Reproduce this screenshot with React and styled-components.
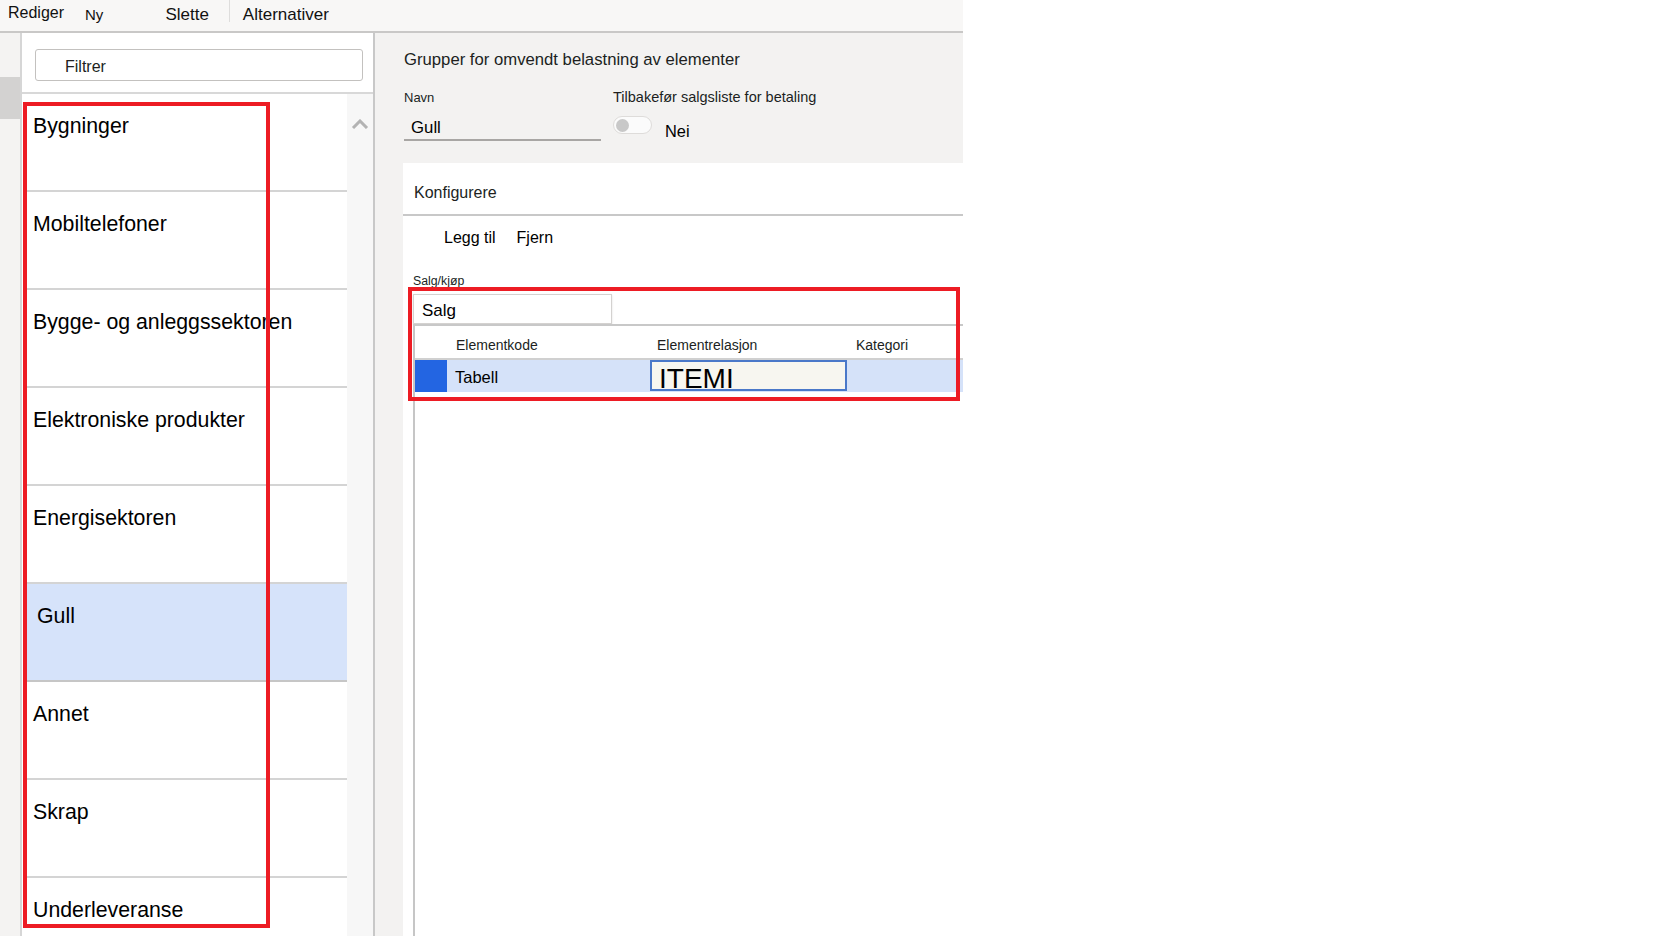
import React from 'react';
import styled, { createGlobalStyle } from 'styled-components';

const GlobalStyle = createGlobalStyle`
  html, body { margin: 0; padding: 0; background: #fff; }
  body { font-family: "Liberation Sans", Arial, sans-serif; color: #000; }
`;

const Frame = styled.div`
  width: 963px;
  height: 936px;
  display: flex;
  flex-direction: column;
  overflow: hidden;
`;

const TopBar = styled.div`
  height: 31px;
  flex-shrink: 0;
  display: flex;
  align-items: flex-start;
  background: #f8f7f6;
  border-bottom: 2px solid #c9c8c7;
`;

const MenuItem = styled.span`
  font-size: ${p => p.size}px;
  line-height: 20px;
  margin-left: ${p => p.gap}px;
  margin-top: ${p => p.top}px;
  color: #111;
  white-space: nowrap;
`;

const MenuDivider = styled.span`
  width: 1px;
  height: 22px;
  margin-left: 20px;
  background: #dedddc;
`;

const Body = styled.div`
  flex: 1;
  min-height: 0;
  display: flex;
`;

const Rail = styled.div`
  width: 20px;
  flex-shrink: 0;
  background: #f4f3f2;
  display: flex;
  flex-direction: column;
`;

const RailMark = styled.div`
  margin-top: 44px;
  height: 42px;
  background: #d3d2d1;
`;

const ListPanel = styled.div`
  position: relative;
  width: 351px;
  flex-shrink: 0;
  background: #fff;
  border-left: 2px solid #d6d6d6;
  border-right: 2px solid #c8c8c8;
  display: flex;
  flex-direction: column;
`;

const FilterBox = styled.div`
  margin: 16px 0 0 13px;
  width: 328px;
  height: 32px;
  box-sizing: border-box;
  border: 1.5px solid #c3c1bf;
  border-radius: 3px;
  padding: 3px 0 0 29px;
  display: flex;
  align-items: center;
  font-size: 16px;
  color: #201f1e;
`;

const ListArea = styled.div`
  margin-top: 11px;
  border-top: 2px solid #d8d8d8;
  flex: 1;
  min-height: 0;
  display: flex;
  overflow: hidden;
`;

const List = styled.div`
  margin-left: 4px;
  width: 321px;
  display: flex;
  flex-direction: column;
`;

const Item = styled.div`
  height: 98px;
  flex-shrink: 0;
  box-sizing: border-box;
  border-bottom: 2px solid ${p => (p.selected ? '#c6c6c6' : '#d4d4d4')};
  background: ${p => (p.selected ? '#d6e3fa' : '#fff')};
  padding: 19px 0 0 ${p => (p.selected ? 11 : 7)}px;
  font-size: 21.3px;
  line-height: 26px;
  white-space: nowrap;
`;

const ScrollTrack = styled.div`
  width: 26px;
  background: #f7f7f7;
  display: flex;
  justify-content: center;
  padding-top: 25px;
  box-sizing: border-box;
`;

const Annotation = styled.div`
  position: absolute;
  left: ${p => p.x}px;
  top: ${p => p.y}px;
  width: ${p => p.w}px;
  height: ${p => p.h}px;
  box-sizing: border-box;
  border: 4px solid #ed1c24;
  pointer-events: none;
`;

const DetailPanel = styled.div`
  position: relative;
  flex: 1;
  background: #f3f2f1;
  display: flex;
  flex-direction: column;
`;

const DetailHead = styled.div`
  height: 130px;
  flex-shrink: 0;
  box-sizing: border-box;
  padding: 17px 0 0 29px;
`;

const Title = styled.div`
  font-size: 16.7px;
  line-height: 20px;
  color: #201f1e;
`;

const FieldsRow = styled.div`
  display: flex;
  margin-top: 20px;
`;

const NameField = styled.div`
  width: 197px;
  display: flex;
  flex-direction: column;
`;

const SmallLabel = styled.div`
  font-size: ${p => p.size}px;
  line-height: 16px;
  color: #201f1e;
  white-space: nowrap;
`;

const NameInput = styled.div`
  margin-top: 10px;
  height: 25px;
  box-sizing: border-box;
  border-bottom: 2px solid #a8a6a4;
  padding-left: 7px;
  font-size: 16.8px;
  line-height: 23px;
`;

const ToggleField = styled.div`
  margin-left: 12px;
  margin-top: -1px;
  display: flex;
  flex-direction: column;
`;

const ToggleRow = styled.div`
  margin-top: 11px;
  display: flex;
  align-items: flex-start;
`;

const Pill = styled.div`
  width: 39px;
  height: 18px;
  box-sizing: border-box;
  border: 1.5px solid #dedcda;
  border-radius: 9px;
  background: #fbfbfb;
  display: flex;
  align-items: center;
  padding-left: 2px;
`;

const Knob = styled.span`
  width: 13px;
  height: 13px;
  border-radius: 50%;
  background: #c8c8c8;
`;

const ToggleText = styled.span`
  margin: 5px 0 0 13px;
  font-size: 16.4px;
  line-height: 20px;
`;

const Card = styled.div`
  margin-left: 28px;
  flex: 1;
  min-height: 0;
  background: #fff;
  display: flex;
  flex-direction: column;
`;

const CardHeader = styled.div`
  height: 53px;
  flex-shrink: 0;
  box-sizing: border-box;
  border-bottom: 2px solid #c8c8c8;
  padding: 20px 0 0 11px;
  font-size: 16px;
  line-height: 20px;
  color: #201f1e;
`;

const Toolbar = styled.div`
  margin-top: 12px;
  padding-left: 41px;
  display: flex;
  gap: 21px;
  font-size: 16px;
  line-height: 20px;
`;

const FieldLabel = styled.div`
  margin: 26px 0 0 10px;
  font-size: 12.3px;
  line-height: 14px;
  color: #201f1e;
`;

const SelectBox = styled.div`
  margin: 6px 0 0 10px;
  width: 199px;
  height: 30px;
  box-sizing: border-box;
  border: 1.5px solid #d4d2d0;
  box-shadow: 0 1px 2px rgba(0, 0, 0, 0.12);
  padding: 3px 0 0 8px;
  display: flex;
  align-items: center;
  font-size: 17px;
`;

const Grid = styled.div`
  margin-left: 10px;
  flex: 1;
  border-left: 2px solid #c6c6c6;
  border-top: 2px solid #c8c8c8;
  display: flex;
  flex-direction: column;
`;

const Row = styled.div`
  display: grid;
  grid-template-columns: 32px 203px 197px 1fr;
  height: ${p => p.h}px;
  box-sizing: border-box;
  background: ${p => p.bg || '#fff'};
  border-bottom: ${p => (p.line ? '2px solid #d0d0d0' : 'none')};
`;

const HeadCell = styled.div`
  padding: 10px 0 0 ${p => p.pad}px;
  font-size: 14px;
  line-height: 18px;
  color: #201f1e;
  white-space: nowrap;
`;

const Selector = styled.div`
  background: #2365e2;
`;

const Cell = styled.div`
  padding: 3px 0 0 8px;
  display: flex;
  align-items: center;
  font-size: 16.5px;
`;

const EditCell = styled.div`
  height: 31px;
  box-sizing: border-box;
  border: 2px solid #4a78c9;
  background: #f7f6f0;
  padding: 4px 0 0 7px;
  font-size: 28px;
  line-height: 26px;
`;

const Chevron = () => (
  <svg width="18" height="10" viewBox="0 0 18 10">
    <polyline points="2,9 9,2 16,9" fill="none" stroke="#b3b3b3" strokeWidth="3" />
  </svg>
);

const groups = [
  'Bygninger',
  'Mobiltelefoner',
  'Bygge- og anleggssektoren',
  'Elektroniske produkter',
  'Energisektoren',
  'Gull',
  'Annet',
  'Skrap',
  'Underleveranse',
];

export default function App() {
  return (
    <>
      <GlobalStyle />
      <Frame>
        <TopBar>
          <MenuItem size={16} gap={8} top={3}>Rediger</MenuItem>
          <MenuItem size={15} gap={21} top={5}>Ny</MenuItem>
          <MenuItem size={17} gap={62} top={5}>Slette</MenuItem>
          <MenuDivider />
          <MenuItem size={17} gap={13} top={5}>Alternativer</MenuItem>
        </TopBar>
        <Body>
          <Rail>
            <RailMark />
          </Rail>
          <ListPanel>
            <FilterBox>Filtrer</FilterBox>
            <ListArea>
              <List>
                {groups.map(g => (
                  <Item key={g} selected={g === 'Gull'}>{g}</Item>
                ))}
              </List>
              <ScrollTrack>
                <Chevron />
              </ScrollTrack>
            </ListArea>
            <Annotation x={1} y={69} w={247} h={826} />
          </ListPanel>
          <DetailPanel>
            <DetailHead>
              <Title>Grupper for omvendt belastning av elementer</Title>
              <FieldsRow>
                <NameField>
                  <SmallLabel size={13}>Navn</SmallLabel>
                  <NameInput>Gull</NameInput>
                </NameField>
                <ToggleField>
                  <SmallLabel size={14.5}>Tilbakefør salgsliste for betaling</SmallLabel>
                  <ToggleRow>
                    <Pill><Knob /></Pill>
                    <ToggleText>Nei</ToggleText>
                  </ToggleRow>
                </ToggleField>
              </FieldsRow>
            </DetailHead>
            <Card>
              <CardHeader>Konfigurere</CardHeader>
              <Toolbar>
                <span>Legg til</span>
                <span>Fjern</span>
              </Toolbar>
              <FieldLabel>Salg/kjøp</FieldLabel>
              <SelectBox>Salg</SelectBox>
              <Grid>
                <Row h={34} line>
                  <span />
                  <HeadCell pad={9}>Elementkode</HeadCell>
                  <HeadCell pad={7}>Elementrelasjon</HeadCell>
                  <HeadCell pad={9}>Kategori</HeadCell>
                </Row>
                <Row h={32} bg="#d5e2f9">
                  <Selector />
                  <Cell>Tabell</Cell>
                  <EditCell>ITEMI</EditCell>
                  <span />
                </Row>
              </Grid>
            </Card>
            <Annotation x={33} y={254} w={552} h={114} />
          </DetailPanel>
        </Body>
      </Frame>
    </>
  );
}
